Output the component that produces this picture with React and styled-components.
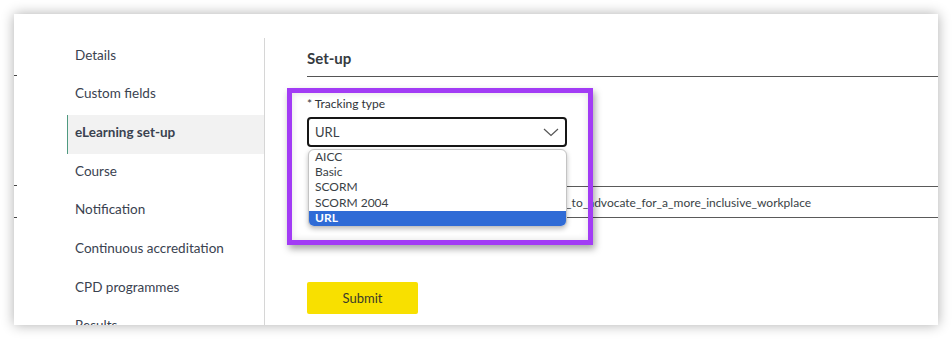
import React from "react";
import styled, { createGlobalStyle } from "styled-components";

const Global = createGlobalStyle`
  html, body { margin: 0; padding: 0; background: #ffffff; }
  body { font-family: Lato, "Open Sans", sans-serif; width: 952px; height: 340px; overflow: hidden; }
  #root { padding: 14px; box-sizing: border-box; width: 952px; height: 340px; }
`;

const Card = styled.div`
  width: 924px;
  height: 311px;
  background: #fff;
  box-shadow: 0 0 12px rgba(0, 0, 0, 0.32);
  display: flex;
  overflow: hidden;
`;

const Gutter = styled.div`
  width: 53px;
  flex: none;
  display: flex;
  flex-direction: column;
`;

const Tick = styled.div`
  width: 3px;
  height: 1px;
  background: #444;
  margin-top: ${(p) => p.$gap}px;
`;

const Sidebar = styled.nav`
  width: 197px;
  flex: none;
  margin-top: 24px;
  border-right: 1px solid #d6d6d6;
  display: flex;
  flex-direction: column;
`;

const NavItem = styled.div`
  height: 38.67px;
  flex: none;
  display: flex;
  align-items: center;
  padding: 0 0 5px 7px;
  font-size: 13.5px;
  color: #3a4250;
  font-weight: ${(p) => (p.$active ? 700 : 400)};
  background: ${(p) => (p.$active ? "#f2f2f2" : "transparent")};
  border-left: 1px solid ${(p) => (p.$active ? "#4f9a80" : "transparent")};
  box-sizing: border-box;
  white-space: nowrap;
`;

const Content = styled.main`
  flex: 1;
  padding: 34px 0 0 42px;
  display: flex;
  flex-direction: column;
  min-width: 0;
`;

const Heading = styled.h2`
  margin: 0;
  font-size: 15px;
  line-height: 20px;
  font-weight: 700;
  color: #353a40;
  padding-bottom: 8px;
  border-bottom: 1px solid #555;
`;

const FieldGroup = styled.div`
  position: relative;
  margin-top: 19px;
  width: 260px;
`;

const Label = styled.div`
  font-size: 12px;
  line-height: 16px;
  color: #30343a;
`;

const Select = styled.div`
  margin-top: 5px;
  height: 30px;
  box-sizing: border-box;
  border: 2px solid #161616;
  border-radius: 4px;
  display: flex;
  align-items: center;
  justify-content: space-between;
  padding: 0 6px 0 6px;
  font-size: 13px;
  color: #3a3f46;
  background: #fff;
`;

const Options = styled.div`
  position: absolute;
  top: 53px;
  left: 1px;
  width: 259px;
  box-sizing: border-box;
  border: 1px solid #c4c4c4;
  border-radius: 6px;
  overflow: hidden;
  background: #fff;
  box-shadow: 0 2px 5px rgba(0, 0, 0, 0.25);
  z-index: 2;
`;

const Option = styled.div`
  height: 15.2px;
  line-height: 14px;
  padding-left: 6px;
  font-size: 12px;
  color: ${(p) => (p.$selected ? "#fff" : "#3a3f46")};
  background: ${(p) => (p.$selected ? "#2f6bd6" : "transparent")};
  font-weight: ${(p) => (p.$selected ? 700 : 400)};
`;

const Highlight = styled.div`
  position: absolute;
  left: -20px;
  top: -8px;
  width: 306px;
  height: 157px;
  box-sizing: border-box;
  border: 5px solid #a23cf5;
  box-shadow: 2px 4px 7px rgba(0, 0, 0, 0.35), inset 0 0 7px rgba(0, 0, 0, 0.12);
  z-index: 3;
  pointer-events: none;
`;

const SecondField = styled.div`
  margin: 15px 0 0 3px;
  display: flex;
  flex-direction: column;
  gap: 8px;
`;

const Input = styled.div`
  height: 32px;
  box-sizing: border-box;
  border-top: 1px solid #5a5a5a;
  border-bottom: 1px solid #5a5a5a;
  display: flex;
  align-items: center;
  padding-left: 5px;
  font-size: 12px;
  color: #3a3f46;
  white-space: nowrap;
`;

const Submit = styled.button`
  margin-top: 64px;
  width: 111px;
  height: 32px;
  border: none;
  border-radius: 2px;
  background: #f8e000;
  color: #3a3a2a;
  font-family: Lato, sans-serif;
  font-size: 13px;
  padding: 0;
`;

const nav = [
  "Details",
  "Custom fields",
  "eLearning set-up",
  "Course",
  "Notification",
  "Continuous accreditation",
  "CPD programmes",
  "Results",
];

const Chevron = () => (
  <svg width="16" height="9" viewBox="0 0 16 9">
    <polyline points="1,1 8,7.5 15,1" fill="none" stroke="#555" strokeWidth="1.2" />
  </svg>
);

export default function App() {
  return (
    <>
      <Global />
      <Card>
        <Gutter>
          <Tick $gap={61} />
          <Tick $gap={109} />
          <Tick $gap={31} />
        </Gutter>
        <Sidebar>
          {nav.map((n) => (
            <NavItem key={n} $active={n === "eLearning set-up"}>
              {n}
            </NavItem>
          ))}
        </Sidebar>
        <Content>
          <Heading>Set-up</Heading>
          <FieldGroup>
            <Label>* Tracking type</Label>
            <Select>
              <span>URL</span>
              <Chevron />
            </Select>
            <Options>
              <Option>AICC</Option>
              <Option>Basic</Option>
              <Option>SCORM</Option>
              <Option>SCORM 2004</Option>
              <Option $selected>URL</Option>
            </Options>
            <Highlight />
          </FieldGroup>
          <SecondField>
            <Label>* Launch URL</Label>
            <Input>https://learning.hb.org/content/courses/5_ways_to_advocate_for_a_more_inclusive_workplace</Input>
          </SecondField>
          <div>
            <Submit>Submit</Submit>
          </div>
        </Content>
      </Card>
    </>
  );
}
